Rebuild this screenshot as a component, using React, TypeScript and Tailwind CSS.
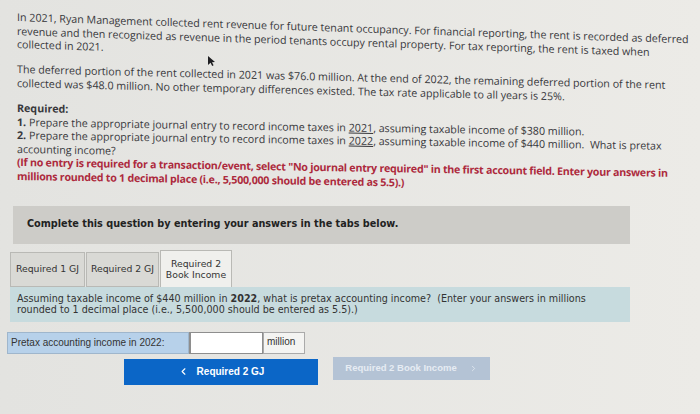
import { ChevronLeft, ChevronRight } from "lucide-react";

const body = { fontFamily: '"Open Sans", "Liberation Sans", sans-serif' };
const verdana = { fontFamily: '"DejaVu Sans", Verdana, sans-serif' };
const arial = { fontFamily: '"Liberation Sans", Arial, sans-serif' };

export default function App() {
    return (
        <div className="w-[700px] h-[414px] overflow-hidden bg-gradient-to-r from-[#e3e3e0] to-[#ecebe7] text-[#38383c] relative" style={body}>
            {/* the photo is a bit tilted at the top, so each block gets a small skew */}
            <div className="pl-[17px] pt-[11px] text-[10.7px] leading-[13.5px] whitespace-nowrap">
                <p className="origin-left skew-y-[1.9deg]">
                    In 2021, Ryan Management collected rent revenue for future tenant occupancy. For financial reporting, the rent is recorded as deferred
                    <br />
                    revenue and then recognized as revenue in the period tenants occupy rental property. For tax reporting, the rent is taxed when
                    <br />
                    collected in 2021.
                </p>
                <p className="mt-[11px] origin-left skew-y-[1.4deg]">
                    The deferred portion of the rent collected in 2021 was $76.0 million. At the end of 2022, the remaining deferred portion of the rent
                    <br />
                    collected was $48.0 million. No other temporary differences existed. The tax rate applicable to all years is 25%.
                </p>
                <div className="mt-[12px] origin-left skew-y-[0.95deg]">
                    <p className="font-bold">Required:</p>
                    <p>
                        <span className="font-bold">1.</span> Prepare the appropriate journal entry to record income taxes in <span className="underline">2021</span>, assuming taxable income of $380 million.
                    </p>
                    <p>
                        <span className="font-bold">2.</span> Prepare the appropriate journal entry to record income taxes in <span className="underline">2022</span>, assuming taxable income of $440 million.&nbsp; What is pretax
                        <br />
                        accounting income?
                    </p>
                    <p className="font-bold text-[#ad2a3d] tracking-[-0.27px]">
                        (If no entry is required for a transaction/event, select "No journal entry required" in the first account field. Enter your answers in
                        <br />
                        millions rounded to 1 decimal place (i.e., 5,500,000 should be entered as 5.5).)
                    </p>
                </div>
            </div>

            {/* cursor */}
            <svg className="absolute left-[207px] top-[55px]" width="9" height="12" viewBox="0 0 9 12">
                <path d="M1 1 L1 10 L3.5 7.8 L5.2 11 L6.6 10.3 L5 7.2 L8 7 Z" fill="#1f1f22" />
            </svg>

            <div className="ml-[13px] mt-[23px] w-[617px] h-[38px] bg-[#cdccc8] flex items-center pl-[14px]">
                <span className="text-[9.7px] font-bold text-[#222]" style={verdana}>
                    Complete this question by entering your answers in the tabs below.
                </span>
            </div>

            <div className="ml-[10px] mt-[6px] w-[620px]" style={verdana}>
                <div className="flex items-end gap-[1px] text-[9.3px] text-[#333]">
                    <div className="w-[75px] h-[35px] bg-[#d9d9d5] border border-[#b9b9b5] flex items-center justify-center">Required 1 GJ</div>
                    <div className="w-[73px] h-[35px] bg-[#d9d9d5] border border-[#b9b9b5] flex items-center justify-center">Required 2 GJ</div>
                    <div className="w-[72px] h-[37px] bg-[#f0f0ed] border border-b-0 border-[#b9b9b5] flex flex-col items-center justify-center leading-[11px]">
                        <span>Required 2</span>
                        <span>Book Income</span>
                    </div>
                </div>
                <div className="h-[35px] bg-[#c7dbde] pl-[7px] pt-[6px] text-[9.6px] leading-[11px] text-[#333]">
                    Assuming taxable income of $440 million in <span className="font-bold">2022</span>, what is pretax accounting income?&nbsp; (Enter your answers in millions
                    <br />
                    rounded to 1 decimal place (i.e., 5,500,000 should be entered as 5.5).)
                </div>
            </div>

            <div className="ml-[7px] mt-[10px] flex h-[22px] text-[10px] text-[#333]" style={arial}>
                <div className="w-[182px] bg-[#b7d1ea] border border-[#9fb6cc] flex items-center pl-[3px]">Pretax accounting income in 2022:</div>
                <div className="w-[74px] bg-white border border-[#8e8e8e] border-l-[2px]" />
                <div className="w-[42px] bg-[#f4f4f2] border border-[#aaa] pl-[3px] pt-[1px]">million</div>
            </div>

            <div className="flex items-start mt-[5px]" style={arial}>
                <div className="ml-[124px] w-[194px] h-[26px] bg-[#0b66c7] flex items-center justify-center gap-[8px] text-white text-[10px] font-bold">
                    <ChevronLeft size={11} strokeWidth={2.5} />
                    <span>Required 2 GJ</span>
                </div>
                <div className="ml-[15px] -mt-[2px] w-[157px] h-[23px] bg-[#b4c3d5] flex items-center justify-center gap-[12px] text-[#e6ecf3] text-[9.5px] font-bold">
                    <span>Required 2 Book Income</span>
                    <ChevronRight size={9} strokeWidth={2} />
                </div>
            </div>
        </div>
    );
}
